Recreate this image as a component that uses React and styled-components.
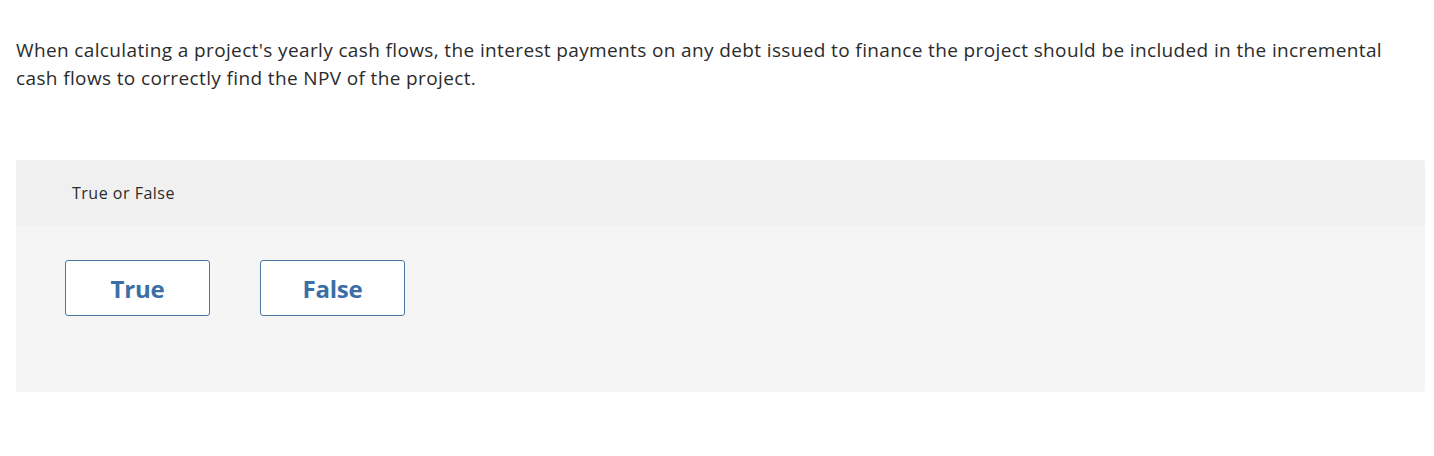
import React from 'react';
import styled, { createGlobalStyle } from 'styled-components';

const GlobalStyle = createGlobalStyle`
  body {
    margin: 0;
    background: #ffffff;
    font-family: "Open Sans", Arial, sans-serif;
    color: #2b2b2b;
  }
`;

const Page = styled.div`
  padding: 36px 9px 0 16px;
`;

const Prompt = styled.p`
  margin: 0;
  font-size: 19px;
  line-height: 28px;
  letter-spacing: 0.37px;
  color: #2b2b2b;
  max-width: 1400px;
`;

const Panel = styled.section`
  margin-top: 68px;
  border-radius: 3px;
  overflow: hidden;
  background: #f5f5f5;
`;

const PanelHeader = styled.div`
  height: 66px;
  display: flex;
  align-items: center;
  padding-left: 56px;
  background: #f0f0f0;
  font-size: 16px;
  letter-spacing: 0.5px;
  color: #2b2b2b;
`;

const Choices = styled.div`
  display: flex;
  gap: 50px;
  padding: 34px 0 76px 49px;
`;

const Choice = styled.button`
  width: 145px;
  height: 56px;
  border: 1px solid #4a76a2;
  border-radius: 3px;
  background: #ffffff;
  color: #3a6ea5;
  font-family: "Open Sans", Arial, sans-serif;
  font-weight: 700;
  font-size: 24px;
  letter-spacing: -0.2px;
  cursor: pointer;
`;

export default function App() {
  return (
    <>
      <GlobalStyle />
      <Page>
        <Prompt>
          When calculating a project's yearly cash flows, the interest payments on any debt issued to finance the project should be included in the incremental cash flows to correctly find the NPV of the project.
        </Prompt>
        <Panel>
          <PanelHeader>True or False</PanelHeader>
          <Choices>
            <Choice>True</Choice>
            <Choice>False</Choice>
          </Choices>
        </Panel>
      </Page>
    </>
  );
}
